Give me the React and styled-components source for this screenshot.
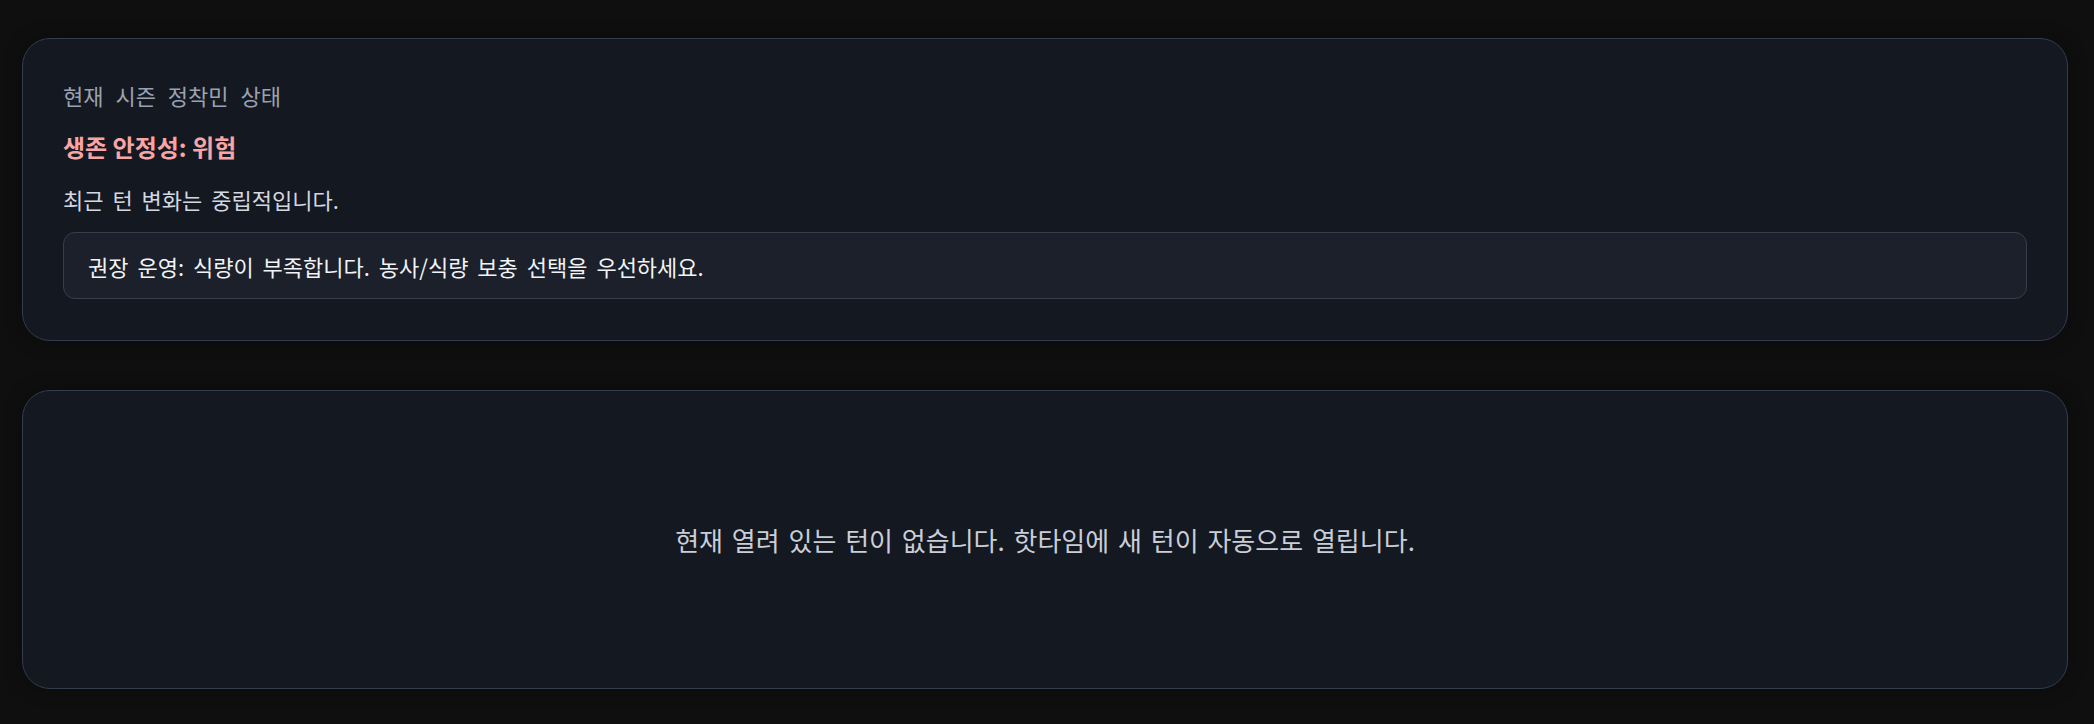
import React from "react";
import styled, { createGlobalStyle } from "styled-components";

const GlobalStyle = createGlobalStyle`
  html, body {
    margin: 0;
    padding: 0;
    background: #0f0f0f;
  }
  body {
    font-family: "Noto Sans CJK KR", "Noto Sans", sans-serif;
  }
`;

const Page = styled.div`
  display: flex;
  flex-direction: column;
  gap: 49px;
  padding: 38px 26px 35px 22px;
`;

const Card = styled.section`
  box-sizing: border-box;
  background: #141821;
  border: 1px solid #343c4d;
  border-radius: 28px;
  padding: 40px 40px 41px 40px;
  box-shadow: 0 0 18px rgba(0, 0, 0, 0.35);
`;

const Label = styled.div`
  font-size: 22px;
  line-height: 32px;
  color: #9aa2b0;
  word-spacing: 7px;
`;

const Title = styled.h2`
  margin: 19px 0 0;
  font-size: 24px;
  line-height: 34px;
  font-weight: 700;
  color: #f7a5a5;
`;

const Body = styled.p`
  margin: 20px 0 0;
  font-size: 22px;
  line-height: 30px;
  color: #d3d8e0;
  word-spacing: 4px;
`;

const Advice = styled.div`
  box-sizing: border-box;
  margin-top: 18px;
  height: 67px;
  display: flex;
  align-items: center;
  padding: 0 24px;
  background: #1b202a;
  border: 1px solid #363e4e;
  border-radius: 12px;
  font-size: 22px;
  color: #f1f3f6;
  word-spacing: 4px;
`;

const EmptyCard = styled(Card)`
  height: 299px;
  display: flex;
  align-items: center;
  justify-content: center;
  padding: 0;
`;

const EmptyText = styled.p`
  margin: 0;
  font-size: 26px;
  color: #c9ced8;
  word-spacing: 3px;
`;

const App = () => {
  return (
    <>
      <GlobalStyle />
      <Page>
        <Card>
          <Label>현재 시즌 정착민 상태</Label>
          <Title>생존 안정성: 위험</Title>
          <Body>최근 턴 변화는 중립적입니다.</Body>
          <Advice>권장 운영: 식량이 부족합니다. 농사/식량 보충 선택을 우선하세요.</Advice>
        </Card>

        <EmptyCard>
          <EmptyText>현재 열려 있는 턴이 없습니다. 핫타임에 새 턴이 자동으로 열립니다.</EmptyText>
        </EmptyCard>
      </Page>
    </>
  );
};

export default App;
